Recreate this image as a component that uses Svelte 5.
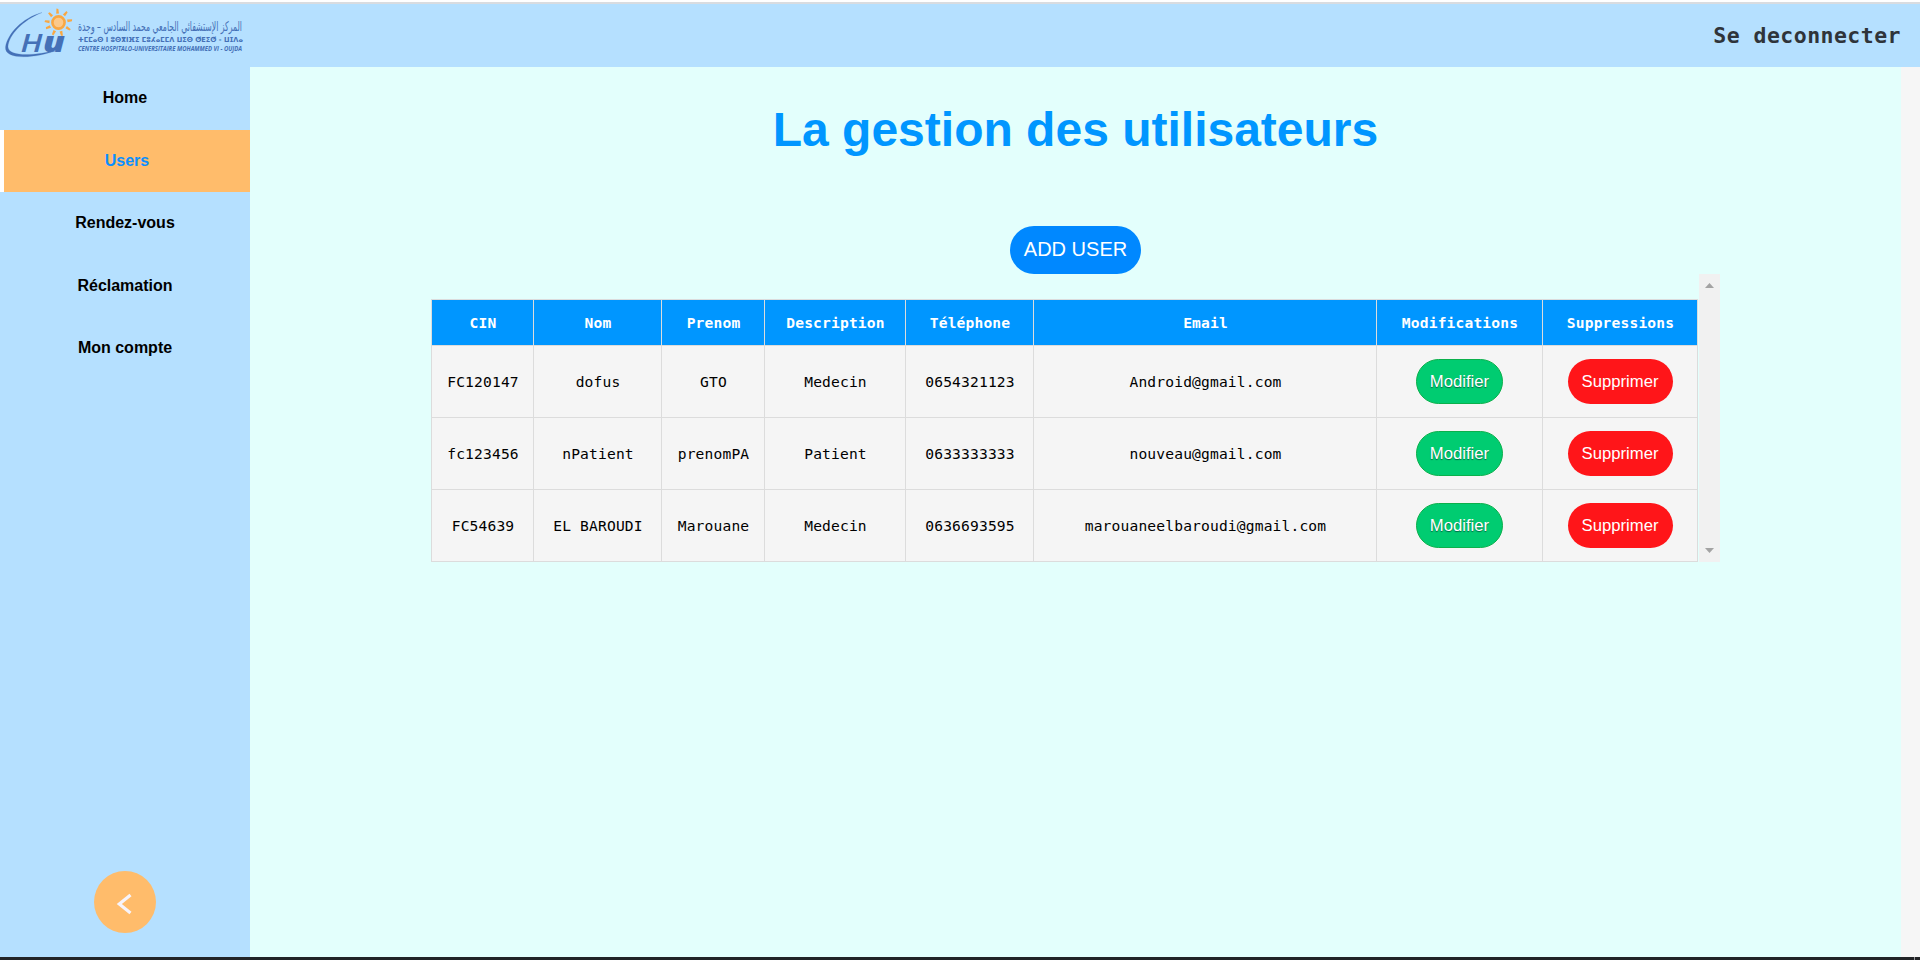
<script>
  const menu = ['Home', 'Users', 'Rendez-vous', 'Réclamation', 'Mon compte'];
  const active = 'Users';
  const headers = ['CIN', 'Nom', 'Prenom', 'Description', 'Téléphone', 'Email', 'Modifications', 'Suppressions'];
  const widths = [102, 128, 103, 141, 128, 343, 166, 155];
  const users = [
    ['FC120147', 'dofus', 'GTO', 'Medecin', '0654321123', 'Android@gmail.com'],
    ['fc123456', 'nPatient', 'prenomPA', 'Patient', '0633333333', 'nouveau@gmail.com'],
    ['FC54639', 'EL BAROUDI', 'Marouane', 'Medecin', '0636693595', 'marouaneelbaroudi@gmail.com']
  ];
  const rays = [-5, 38, 80, 122, 165, 205, 245, 275, 315];
</script>

<div class="page">
  <header>
    <svg class="logo" width="250" height="63" viewBox="0 4 250 63">
      <g transform="translate(58.5 22.5)" fill="#f9a742">
        <circle r="6.100" fill="#fbc98b" stroke="#f9a742" stroke-width="2.600" />
        {#each rays as r}
          <path d="M-1.500 -9L-.8 -14L1 -13.500L1.300 -9Z" transform="rotate({r})" />
        {/each}
      </g>
      <path d="M42 12.500C22 18 7.500 34 5.500 47C4 60 34 59 58 50C36 55.500 9 57.500 8 47C8.500 35 23 20 42 12.500Z" fill="#4470b7" stroke="#4470b7" stroke-width=".2" />
      <g fill="#4470b7">
        <text x="20.500" y="51.500" font-family="Open Sans, sans-serif" font-size="26" font-weight="600" font-style="italic" textLength="22" lengthAdjust="spacingAndGlyphs">H</text>
        <text x="43" y="51.500" font-family="Open Sans, sans-serif" font-size="28" font-weight="800" font-style="italic" textLength="22" lengthAdjust="spacingAndGlyphs">u</text>
        <text x="78" y="31" direction="ltr" font-family="DejaVu Sans, sans-serif" font-size="13.500" textLength="164" lengthAdjust="spacingAndGlyphs">المركز الإستشفائي الجامعي محمد السادس – وجدة</text>
        <text x="78" y="41.500" font-family="DejaVu Sans, sans-serif" font-weight="bold" font-size="7" textLength="165" lengthAdjust="spacingAndGlyphs">ⵜⵎⵎⴰⵙ ⵏ ⵓⵙⴳⵏⴼⵉ ⵎⵓⵃⴰⵎⵎⴷ ⵡⵉⵙ ⵚⴹⵉⵚ - ⵡⵊⴷⴰ</text>
        <text x="78" y="50.500" font-family="Open Sans, sans-serif" font-weight="bold" font-style="italic" font-size="7.200" textLength="164" lengthAdjust="spacingAndGlyphs">CENTRE HOSPITALO-UNIVERSITAIRE MOHAMMED VI - OUJDA</text>
      </g>
    </svg>
    <a class="logout" href="#logout">Se deconnecter</a>
  </header>

  <div class="body">
    <nav>
      <ul>
        {#each menu as item}
          <li class:active={item === active}>{item}</li>
        {/each}
      </ul>
      <button class="collapse" aria-label="Menu">
        <svg width="62" height="62" viewBox="0 0 62 62"><path d="M36.500 24L25.300 33L36.500 42" fill="none" stroke="#f7f4fb" stroke-width="3.200" /></svg>
      </button>
    </nav>

    <main>
      <h1>La gestion des utilisateurs</h1>
      <button class="add">ADD USER</button>
      <div class="scroller">
        <table>
          <colgroup>
            {#each widths as w}<col style="width:{w}px" />{/each}
          </colgroup>
          <thead>
            <tr>{#each headers as h}<th>{h}</th>{/each}</tr>
          </thead>
          <tbody>
            {#each users as user}
              <tr>
                {#each user as value}<td>{value}</td>{/each}
                <td class="action"><button class="pill edit">Modifier</button></td>
                <td class="action"><button class="pill remove">Supprimer</button></td>
              </tr>
            {/each}
          </tbody>
        </table>
        <div class="bar">
          <svg width="9" height="5"><path d="M0 5L4.500 0L9 5Z" fill="#a3a3a3" /></svg>
          <svg width="9" height="5"><path d="M0 0L4.500 5L9 0Z" fill="#a3a3a3" /></svg>
        </div>
      </div>
    </main>
    <div class="gutter"></div>
  </div>
  <footer></footer>
</div>

<style>
  :global(body) { margin: 0; overflow: hidden; }
  .page {
    width: 1920px; height: 960px; box-sizing: border-box;
    display: flex; flex-direction: column;
    padding-top: 2px; background: #fff;
    font-family: "Liberation Sans", Arial, sans-serif;
  }
  header {
    height: 63px; flex: none; border-top: 2px solid #d9dce0;
    background: #b5e0ff;
    display: flex; justify-content: space-between;
  }
  .logo { display: block; overflow: visible; }
  .logout {
    margin: 18px 19px 0 0;
    font: bold 21.500px/28px "DejaVu Sans Mono", monospace;
    letter-spacing: .46px; color: #2f343a; text-decoration: none;
  }
  .body { flex: 1; display: flex; min-height: 0; }
  nav {
    width: 250px; background: #b5e0ff;
    display: flex; flex-direction: column; align-items: center; justify-content: space-between;
    padding-bottom: 24px; box-sizing: border-box;
  }
  ul { list-style: none; margin: 0; padding: 0.500px 0 0; width: 100%; }
  li {
    height: 62.400px; line-height: 62px; box-sizing: border-box;
    text-align: center; font-size: 16px; font-weight: bold; color: #000;
  }
  li:first-child { line-height: 60px; }
  li.active { background: #ffbc6b; border-left: 4px solid #fff; color: #0a8fff; }
  button { font-family: inherit; padding: 0; cursor: pointer; }
  .collapse { width: 62px; height: 62px; border: 0; border-radius: 50%; background: #ffbc6b; }
  .collapse svg { display: block; }
  main {
    flex: 1; background: #e3fffc;
    display: flex; flex-direction: column; align-items: center;
  }
  h1 { margin: 35px 0 0; font-size: 48px; line-height: 56px; color: #0096ff; }
  .add {
    margin-top: 68px; width: 131px; height: 48px; border: 0; border-radius: 24px;
    background: #0088ff; color: #fff; font-size: 20px; line-height: 46px; padding-bottom: 2px;
  }
  .scroller { width: 1289px; height: 288px; display: flex; justify-content: space-between; }
  table {
    width: 1267px; height: 263px; margin-top: 25px; table-layout: fixed;
    border-collapse: separate; border-spacing: 0; box-sizing: border-box;
    border: 1px solid #dcdcdc; border-width: 1px 0 0 1px;
    font: 14.600px "DejaVu Sans Mono", monospace; letter-spacing: .16px;
  }
  th, td {
    padding: 0 0 0 1px; text-align: center; box-sizing: border-box; vertical-align: middle;
    border: 1px solid #dcdcdc; border-width: 0 1px 1px 0;
  }
  th { height: 46px; background: #0096ff; color: #fff; }
  td { height: 72px; background: #f5f5f5; color: #000; }
  td.action { padding: 0; }
  .pill {
    display: block; margin: 0 auto; height: 45px; border-radius: 22.500px;
    font-family: "Liberation Sans", Arial, sans-serif; letter-spacing: 0;
    color: #fff; font-size: 16.700px; line-height: 43px;
  }
  .edit {
    width: 87px; background: #00cc71; border: 1px solid #0bb04b;
    text-shadow: 0 1px 1px #064;
  }
  .remove { width: 105px; background: #ff1519; border: 0; }
  .bar {
    width: 21px; height: 100%; background: #f1f1f1;
    display: flex; flex-direction: column; align-items: center; justify-content: space-between;
    padding: 9px 0; box-sizing: border-box;
  }
  .gutter { width: 19px; background: #f6f6f6; }
  footer { flex: none; height: 3px; background: linear-gradient(to right, #222427 1914px, #96989b 1914px 1915px, #222427 1915px); }
</style>
